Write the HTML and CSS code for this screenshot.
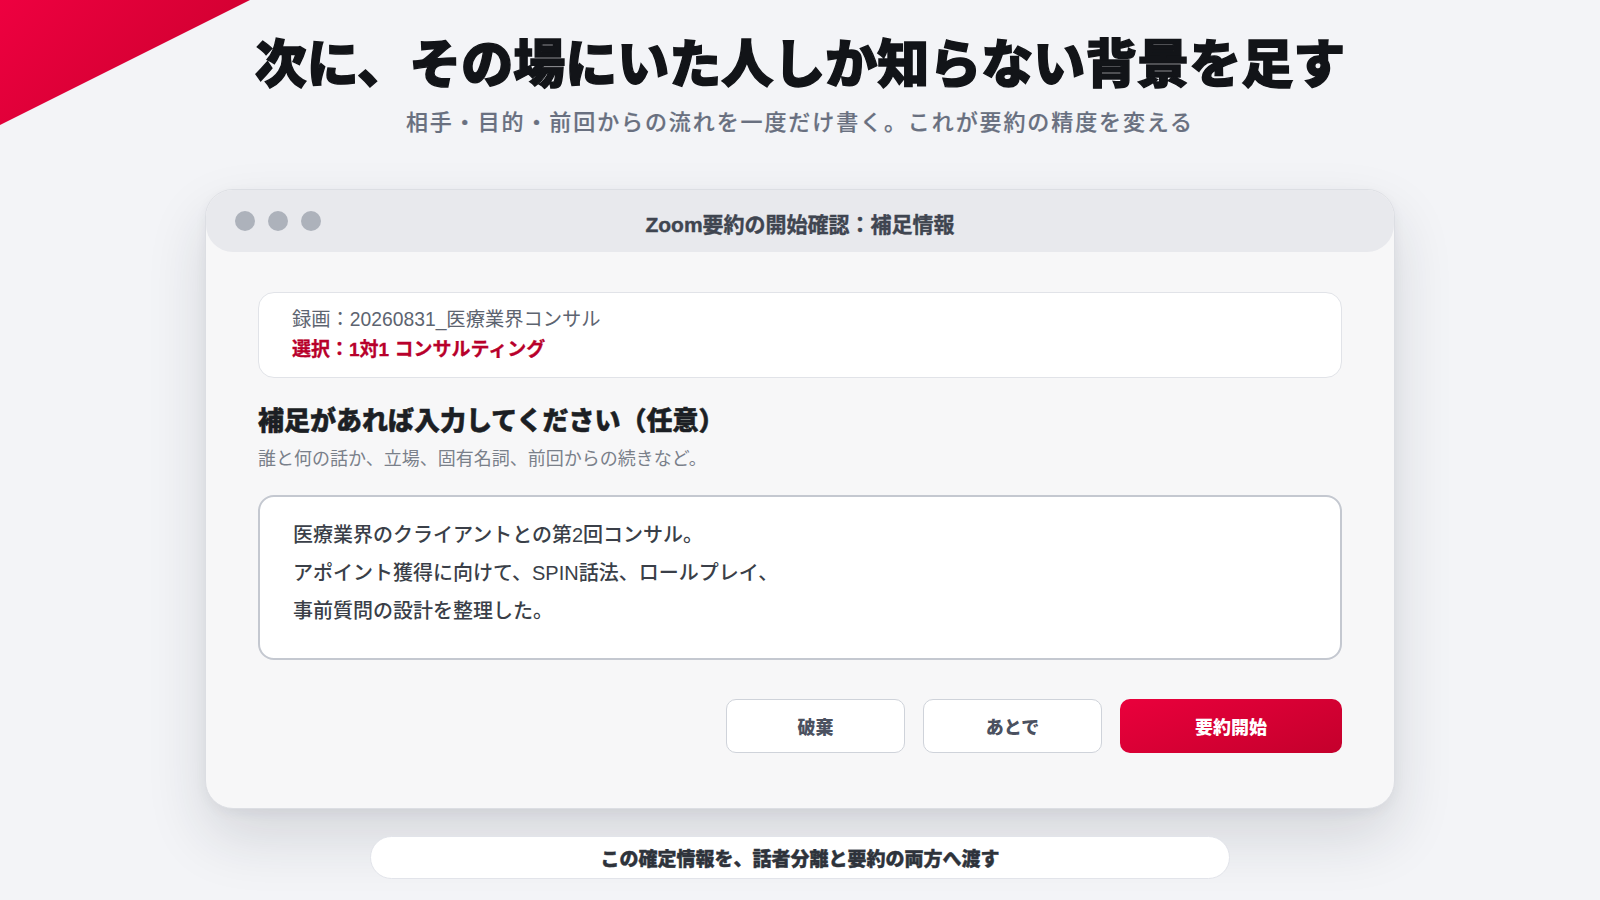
FILE: index.html
```html
<!DOCTYPE html>
<html lang="ja">
<head>
<meta charset="utf-8">
<title>補足情報</title>
<link rel="stylesheet" href="styles.css">
</head>
<body>
<div class="corner"></div>
<main class="page">
  <header class="hero">
    <h1 class="hero-title">次に、その場にいた人しか知らない背景を足す</h1>
    <p class="hero-sub">相手・目的・前回からの流れを一度だけ書く。これが要約の精度を変える</p>
  </header>

  <section class="window">
    <div class="titlebar">
      <div class="dots"><span class="dot"></span><span class="dot"></span><span class="dot"></span></div>
      <div class="titlebar-text">Zoom要約の開始確認：補足情報</div>
    </div>
    <div class="window-body">
      <div class="info-box">
        <div class="info-rec">録画：20260831_医療業界コンサル</div>
        <div class="info-sel">選択：1対1 コンサルティング</div>
      </div>
      <h2 class="form-heading">補足があれば入力してください（任意）</h2>
      <p class="form-hint">誰と何の話か、立場、固有名詞、前回からの続きなど。</p>
      <div class="textarea">
        <div class="ta-line">医療業界のクライアントとの第2回コンサル。</div>
        <div class="ta-line">アポイント獲得に向けて、SPIN話法、ロールプレイ、</div>
        <div class="ta-line">事前質問の設計を整理した。</div>
      </div>
      <div class="actions">
        <button class="btn btn-ghost">破棄</button>
        <button class="btn btn-ghost">あとで</button>
        <button class="btn btn-primary">要約開始</button>
      </div>
    </div>
  </section>

  <div class="footer-pill">この確定情報を、話者分離と要約の両方へ渡す</div>
</main>
</body>
</html>
```
FILE: styles.css
```css
* { box-sizing: border-box; }
html, body { margin: 0; padding: 0; }
body {
  width: 1600px;
  height: 900px;
  overflow: hidden;
  background: #f3f4f7;
  font-family: "Liberation Sans", "Noto Sans CJK JP", sans-serif;
  color: #1f2329;
  position: relative;
}
.corner {
  position: absolute;
  left: 0; top: 0;
  width: 250px; height: 125px;
  background: linear-gradient(135deg, #ee0040 0%, #c8002c 100%);
  clip-path: polygon(0 0, 100% 0, 0 100%);
}
.page {
  display: flex;
  flex-direction: column;
  align-items: center;
  padding-top: 30px;
}
.hero { text-align: center; }
.hero-title {
  margin: 0;
  font-family: "Noto Sans CJK JP", sans-serif;
  font-size: 52px;
  line-height: 62px;
  font-weight: 900;
  color: #121418;
  -webkit-text-stroke: 1.4px #121418;
}
.hero-sub {
  margin: 13px 0 0;
  font-family: "Noto Sans CJK JP", sans-serif;
  font-size: 22px;
  line-height: 31px;
  font-weight: 500;
  color: #697080;
  letter-spacing: 1.9px;
  -webkit-text-stroke: 0.2px #697080;
}
.window {
  margin-top: 53px;
  width: 1190px;
  height: 620px;
  background: #f7f7f8;
  border: 1px solid #dcdee3;
  border-radius: 28px;
  box-shadow: 0 28px 60px rgba(30, 35, 50, 0.14), 0 4px 12px rgba(30, 35, 50, 0.05);
  display: flex;
  flex-direction: column;
}
.titlebar {
  position: relative;
  height: 62px;
  background: #e8e9ed;
  border-radius: 27px;
  display: flex;
  align-items: center;
  justify-content: center;
}
.dots {
  position: absolute;
  left: 29px;
  top: 21px;
  display: flex;
  gap: 13px;
}
.dot {
  width: 20px; height: 20px;
  border-radius: 50%;
  background: #adb2bb;
}
.titlebar-text {
  font-size: 21px;
  font-weight: 700;
  color: #3f4550;
  margin-top: 4px;
  -webkit-text-stroke: 0.4px #3f4550;
}
.window-body {
  padding: 40px 52px 0;
  display: flex;
  flex-direction: column;
}
.info-box {
  background: #ffffff;
  border: 1px solid #e1e3e8;
  border-radius: 16px;
  padding: 12px 33px 12px;
  height: 86px;
}
.info-rec {
  font-size: 19.3px;
  line-height: 30px;
  color: #5d6470;
}
.info-sel {
  font-size: 19px;
  line-height: 30px;
  font-weight: 700;
  color: #b8002b;
  -webkit-text-stroke: 0.3px #b8002b;
}
.form-heading {
  margin: 23px 0 0;
  font-family: "Noto Sans CJK JP", sans-serif;
  font-size: 26px;
  line-height: 36px;
  font-weight: 900;
  color: #1c1f24;
  -webkit-text-stroke: 0.5px #1c1f24;
}
.form-hint {
  margin: 9px 0 0;
  font-size: 18px;
  line-height: 26px;
  color: #7a808a;
}
.textarea {
  margin-top: 23px;
  height: 165px;
  background: #ffffff;
  border: 2px solid #c4c8d0;
  border-radius: 16px;
  padding: 19px 33px 0;
}
.ta-line {
  font-size: 20px;
  line-height: 38px;
  font-weight: 500;
  color: #3a3f48;
}
.actions {
  margin-top: 39px;
  display: flex;
  justify-content: flex-end;
  gap: 18px;
}
.btn {
  height: 54px;
  border-radius: 10px;
  font-family: "Noto Sans CJK JP", sans-serif;
  font-size: 18px;
  font-weight: 900;
  cursor: pointer;
}
.btn-ghost {
  width: 179px;
  background: #ffffff;
  border: 1.5px solid #cfd3da;
  color: #4b5160;
}
.btn-primary {
  width: 222px;
  border: none;
  color: #ffffff;
  background: linear-gradient(160deg, #ea003c 0%, #c4002c 100%);
}
.footer-pill {
  margin-top: 27px;
  width: 860px;
  height: 43px;
  border-radius: 22px;
  background: #ffffff;
  border: 1px solid #e2e4ea;
  display: flex;
  align-items: center;
  justify-content: center;
  font-family: "Noto Sans CJK JP", sans-serif;
  font-size: 19px;
  font-weight: 900;
  color: #2e333b;
  -webkit-text-stroke: 0.4px #2e333b;
}
```
